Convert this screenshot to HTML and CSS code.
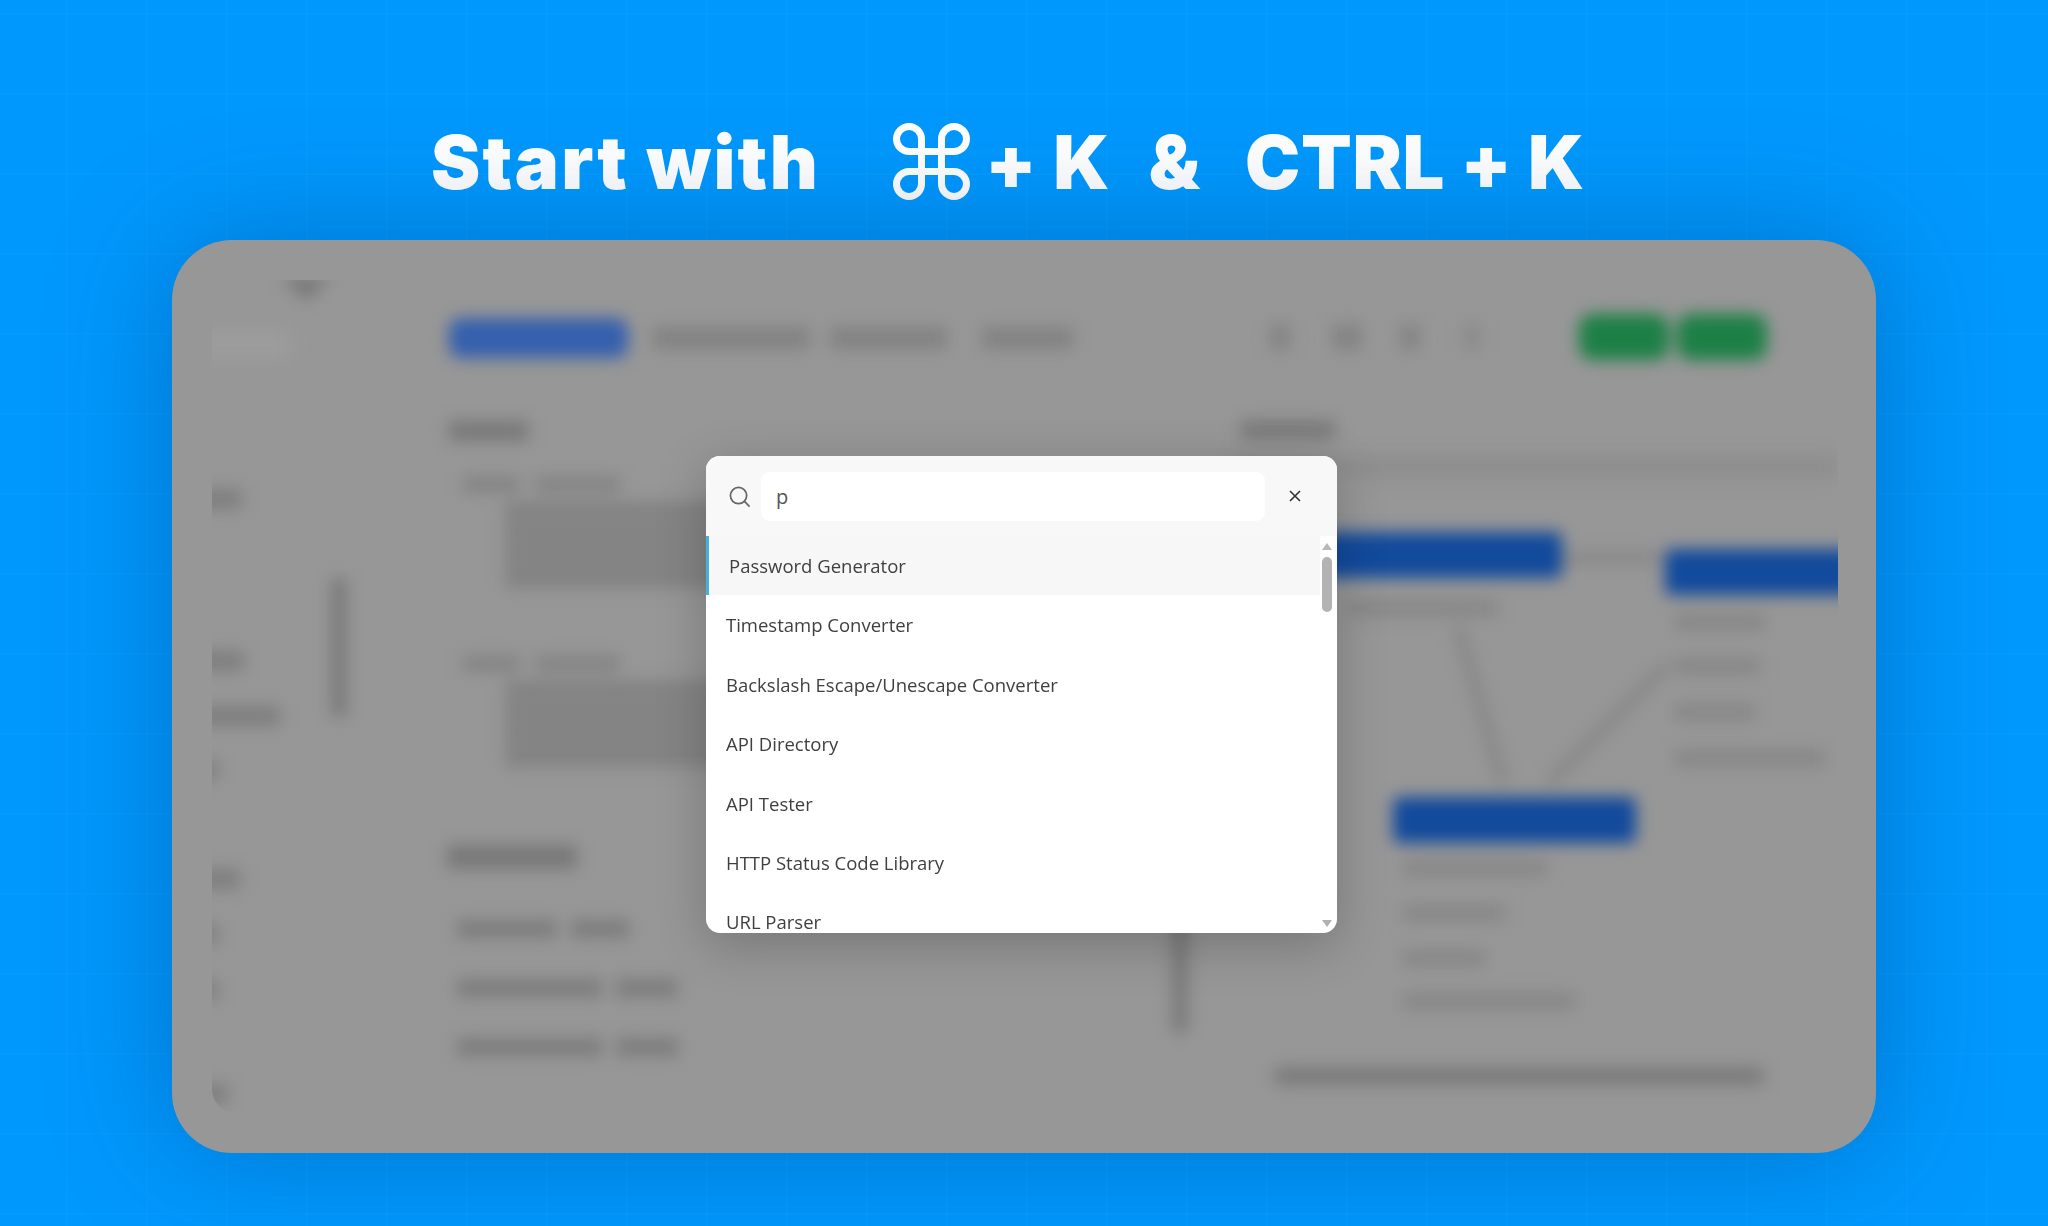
FILE: index.html
```html
<!DOCTYPE html>
<html lang="en">

<head>
    <meta charset="UTF-8">
    <title>Command palette</title>
    <link rel="stylesheet" href="styles.css">
</head>

<body>
    <h1 class="headline">
        <span class="start">Start with</span>
        <svg class="cmd-icon" viewBox="-3.5 -3.5 77 77" aria-hidden="true">
            <path d="M25 25H45V45H25ZM25 25V12.5A12.5 12.5 0 1 0 12.5 25H25M45 25V12.5A12.5 12.5 0 1 1 57.5 25H45M45 45V57.5A12.5 12.5 0 1 0 57.5 45H45M25 45V57.5A12.5 12.5 0 1 1 12.5 45H25" />
        </svg>
        <span class="combo-mac">+ K</span>
        <span class="amp">&amp;</span>
        <span class="combo-win">CTRL + K</span>
    </h1>

    <div class="card">
        <div class="app">
            <div class="app-blur">
                <div class="sidebar">
                    <div class="side-list">
                        <div class="side-tip"></div>
                        <div class="side-logo"></div>
                        <div class="side-row r1"></div>
                        <div class="side-row r2"></div>
                        <div class="side-row r3"></div>
                        <div class="side-row r4"></div>
                        <div class="side-row r5"></div>
                        <div class="side-row r6"></div>
                        <div class="side-row r7"></div>
                        <div class="side-row r8"></div>
                    </div>
                    <div class="side-scroll"></div>
                </div>

                <div class="panel-left">
                    <div class="tabs">
                        <div class="tab-active"></div>
                        <div class="tab t1"></div>
                        <div class="tab t2"></div>
                        <div class="tab t3"></div>
                    </div>
                    <div class="title-blob input-title"></div>
                    <div class="code">
                        <div class="code-head"><span class="k1"></span><span class="k2"></span></div>
                        <div class="code-body"></div>
                        <div class="code-head second"><span class="k1"></span><span class="k2"></span></div>
                        <div class="code-body"></div>
                    </div>
                    <div class="metrics">
                        <div>
                            <div class="title-blob metrics-title"></div>
                            <div class="metric m1"><span></span><span></span></div>
                            <div class="metric m2"><span></span><span></span></div>
                            <div class="metric m3"><span></span><span></span></div>
                        </div>
                        <div class="panel-scroll"></div>
                    </div>
                </div>

                <div class="panel-right">
                    <div class="toolbar">
                        <div class="tool w1"></div>
                        <div class="tool w2"></div>
                        <div class="tool w3"></div>
                        <div class="tool w4"></div>
                        <div class="green first"></div>
                        <div class="green"></div>
                    </div>
                    <div class="title-blob output-title"></div>
                    <div class="band"></div>
                    <div class="diagram">
                        <svg class="edges" viewBox="0 0 593 580">
                            <path d="M322 79H420M218 147L263 304M427 186L309 304" />
                        </svg>
                        <div class="node n1"></div>
                        <div class="node n2"></div>
                        <div class="node n3"></div>
                        <div class="field f1"></div>
                        <div class="field f2"></div>
                        <div class="field f3"></div>
                        <div class="field f4"></div>
                        <div class="field f5"></div>
                        <div class="field f6"></div>
                        <div class="field f7"></div>
                        <div class="field f8"></div>
                        <div class="field f9"></div>
                    </div>
                    <div class="hscroll"></div>
                </div>
            </div>
        </div>

        <div class="palette">
            <div class="palette-head">
                <svg class="search-icon" viewBox="0 0 24 24" aria-hidden="true">
                    <circle cx="11" cy="11" r="8.5" />
                    <path d="M17.2 17.2L22 22" />
                </svg>
                <div class="search-input">p</div>
                <svg class="close-icon" viewBox="0 0 12 12" aria-hidden="true">
                    <path d="M1 1L11 11M11 1L1 11" />
                </svg>
            </div>
            <div class="palette-body">
                <ul class="results">
                    <li class="active">Password Generator</li>
                    <li>Timestamp Converter</li>
                    <li>Backslash Escape/Unescape Converter</li>
                    <li>API Directory</li>
                    <li>API Tester</li>
                    <li>HTTP Status Code Library</li>
                    <li>URL Parser</li>
                </ul>
                <div class="scrollbar">
                    <div class="arrow-up"></div>
                    <div class="thumb"></div>
                    <div class="arrow-down"></div>
                </div>
            </div>
        </div>
    </div>
</body>

</html>
```

FILE: styles.css
```css
html, body {
    height: 100%;
}

body {
    margin: 0;
    height: 1226px;
    overflow: hidden;
    font-family: "Open Sans", "Noto Sans", sans-serif;
    background-color: #0098fd;
    background-image:
        linear-gradient(rgba(255, 255, 255, 0.02) 2px, transparent 2px),
        linear-gradient(90deg, rgba(255, 255, 255, 0.02) 2px, transparent 2px);
    background-size: 80px 80px;
    background-position: 66px 13px;
}

/* headline */
.headline {
    display: flex;
    align-items: center;
    height: 240px;
    margin: 0;
    padding: 83px 0 0 431px;
    box-sizing: border-box;
    color: #fff;
    font-family: Inter, "Liberation Sans", sans-serif;
    font-size: 74px;
    font-weight: 900;
    line-height: 1;
    white-space: nowrap;
}

.headline span {
    display: block;
}

.start {
    letter-spacing: 2.3px;
}

.cmd-icon {
    flex: none;
    width: 77px;
    height: 77px;
    margin-left: 73px;
    fill: none;
    stroke: #fff;
    stroke-width: 7;
}

.combo-mac {
    margin-left: 15px;
    letter-spacing: 1px;
}

.amp {
    margin-left: 38px;
}

.combo-win {
    margin-left: 45px;
    letter-spacing: 0.7px;
}

/* screenshot card */
.card {
    position: relative;
    width: 1704px;
    height: 913px;
    margin-left: 172px;
    border-radius: 60px;
    background-color: #979797;
    box-shadow: 0 0 120px rgba(0, 50, 110, 0.35);
}

.app {
    width: 1626px;
    height: 833px;
    margin-left: 40px;
    position: relative;
    top: 40px;
    overflow: hidden;
    border-bottom-left-radius: 24px;
}

.app-blur {
    display: flex;
    height: 100%;
    filter: blur(8px);
}

/* blurred sidebar */
.sidebar {
    display: flex;
    flex: 0 0 230px;
}

.side-list {
    flex: 0 0 118px;
}

.side-tip {
    width: 50px;
    height: 22px;
    margin: -2px 0 0 69px;
    background-color: #767676;
    clip-path: polygon(0 0, 100% 0, 50% 100%);
}

.side-logo {
    width: 100px;
    height: 30px;
    margin: 30px 0 0 -20px;
    background-color: #9c9c9c;
}

.side-row {
    height: 20px;
    margin-left: -30px;
    background-color: #7e7e7e;
    border-radius: 4px;
}

.r1 { width: 60px; margin-top: 129px; }
.r2 { width: 62px; margin-top: 142px; }
.r3 { width: 98px; margin-top: 35px; }
.r4 { width: 36px; margin-top: 34px; }
.r5 { width: 58px; margin-top: 89px; }
.r6 { width: 36px; margin-top: 35px; }
.r7 { width: 36px; margin-top: 36px; }
.r8 { width: 46px; margin-top: 84px; }

.side-scroll {
    flex: 0 0 16px;
    height: 141px;
    margin-top: 297px;
    border-radius: 8px;
    background-color: #7a7a7a;
}

/* blurred left panel */
.panel-left {
    flex: 0 0 773px;
    padding-top: 38px;
    box-sizing: border-box;
}

.tabs {
    display: flex;
    align-items: center;
    height: 39px;
    padding-left: 7px;
}

.tab-active {
    width: 179px;
    height: 40px;
    border-radius: 12px;
    background-color: #3560ad;
}

.tab {
    height: 22px;
    background-color: #828282;
}

.t1 { width: 157px; margin-left: 25px; }
.t2 { width: 117px; margin-left: 20px; }
.t3 { width: 91px; margin-left: 35px; }

.title-blob {
    height: 20px;
    background-color: #787878;
}

.input-title {
    width: 79px;
    margin: 64px 0 0 7px;
}

.code {
    height: 407px;
    padding: 36px 0 0 21px;
    box-sizing: border-box;
}

.code-head {
    display: flex;
    gap: 15px;
}

.code-head span {
    height: 15px;
    background-color: #828282;
}

.code-head.second {
    margin-top: 66px;
}

.k1 { width: 57px; }
.k2 { width: 85px; }

.code-body {
    width: 300px;
    height: 88px;
    margin: 10px 0 0 42px;
    background-image: repeating-linear-gradient(#818181 0 15px, #8a8a8a 15px 22px);
}

.metrics {
    display: flex;
    justify-content: space-between;
    padding-right: 27px;
}

.metrics-title {
    width: 130px;
    height: 24px;
    margin: -3px 0 0 5px;
}

.metric {
    display: flex;
    gap: 14px;
    margin: 51px 0 0 15px;
}

.metric span {
    height: 18px;
    background-color: #7c7c7c;
}

.m2, .m3 {
    margin-top: 41px;
}

.m1 span:first-child { width: 100px; }
.m1 span:last-child { width: 58px; }
.m2 span:first-child, .m3 span:first-child { width: 145px; }
.m2 span:last-child, .m3 span:last-child { width: 62px; }

.panel-scroll {
    width: 16px;
    height: 144px;
    margin-top: 42px;
    border-radius: 8px;
    background-color: #7a7a7a;
}

/* blurred right panel */
.panel-right {
    flex: 1;
    padding: 33px 0 0 20px;
    box-sizing: border-box;
}

.toolbar {
    display: flex;
    align-items: center;
    height: 47px;
    padding-left: 35px;
}

.tool {
    height: 26px;
    background-color: #848484;
}

.w1 { width: 20px; }
.w2 { width: 30px; margin-left: 42px; }
.w3 { width: 20px; margin-left: 38px; }
.w4 { width: 16px; margin-left: 44px; background-color: #8a8a8a; }

.green {
    flex: none;
    width: 90px;
    height: 46px;
    margin-left: 8px;
    border-radius: 14px;
    background-color: #1c8046;
}

.green.first {
    margin-left: 99px;
}

.output-title {
    width: 94px;
    margin: 60px 0 0 6px;
    background-color: #7b7b7b;
}

.band {
    height: 24px;
    margin-top: 15px;
    background-color: #8e8e8e;
}

.diagram {
    position: relative;
    height: 580px;
}

.edges {
    position: absolute;
    inset: 0;
    width: 100%;
    height: 100%;
    fill: none;
    stroke: #858585;
    stroke-width: 10;
}

.node {
    position: absolute;
    border-radius: 6px;
    background-color: #124a9c;
}

.n1 { left: 50px; top: 53px; width: 277px; height: 46px; }
.n2 { left: 430px; top: 70px; width: 220px; height: 46px; }
.n3 { left: 158px; top: 318px; width: 243px; height: 46px; }

.field {
    position: absolute;
    height: 16px;
    background-color: #868686;
}

.f1 { left: 113px; top: 121px; width: 150px; }
.f2 { left: 440px; top: 135px; width: 90px; }
.f3 { left: 440px; top: 179px; width: 85px; }
.f4 { left: 440px; top: 225px; width: 80px; }
.f5 { left: 440px; top: 271px; width: 150px; }
.f6 { left: 168px; top: 381px; width: 144px; }
.f7 { left: 168px; top: 426px; width: 102px; }
.f8 { left: 168px; top: 471px; width: 82px; }
.f9 { left: 168px; top: 514px; width: 172px; }

.hscroll {
    width: 492px;
    height: 18px;
    margin: 8px 0 0 38px;
    border-radius: 9px;
    background-color: #7a7a7a;
}

/* command palette */
.palette {
    position: absolute;
    left: 534px;
    top: 216px;
    width: 631px;
    height: 477px;
    overflow: hidden;
    border-radius: 14px;
    background-color: #fff;
    box-shadow: 0 12px 50px rgba(0, 0, 0, 0.22);
}

.palette-head {
    display: flex;
    align-items: center;
    height: 80px;
    padding: 0 36px 0 22px;
    box-sizing: border-box;
    background-color: #f8f8f8;
}

.search-icon {
    flex: none;
    width: 23px;
    height: 23px;
    margin-right: 10px;
    fill: none;
    stroke: #666;
    stroke-width: 1.8;
    stroke-linecap: round;
}

.search-input {
    flex: 1;
    height: 49px;
    padding-left: 15px;
    border-radius: 9px;
    background-color: #fff;
    color: #555;
    font-size: 20px;
    line-height: 49px;
}

.close-icon {
    flex: none;
    width: 12px;
    height: 12px;
    margin-left: 24px;
    fill: none;
    stroke: #333;
    stroke-width: 1.6;
}

.palette-body {
    display: flex;
    height: 397px;
}

.results {
    flex: 1;
    margin: 0;
    padding: 0;
    list-style: none;
    color: #3f3f3f;
    font-size: 18.5px;
}

.results li {
    height: 59.4px;
    padding-left: 20px;
    line-height: 60px;
    white-space: nowrap;
}

.results li.active {
    padding-left: 20px;
    border-left: 3px solid #45b0d8;
    background-color: #f7f7f7;
}

.scrollbar {
    display: flex;
    flex-direction: column;
    align-items: center;
    flex: 0 0 14px;
    padding: 7px 3px 6px 0;
}

.thumb {
    width: 10px;
    height: 55px;
    margin-top: 7px;
    border-radius: 5px;
    background-color: #b3b3b3;
}

.arrow-up, .arrow-down {
    width: 0;
    height: 0;
    border-left: 5px solid transparent;
    border-right: 5px solid transparent;
}

.arrow-up {
    border-bottom: 7px solid #b8b8b8;
}

.arrow-down {
    margin-top: auto;
    border-top: 7px solid #b0b0b0;
}
```
